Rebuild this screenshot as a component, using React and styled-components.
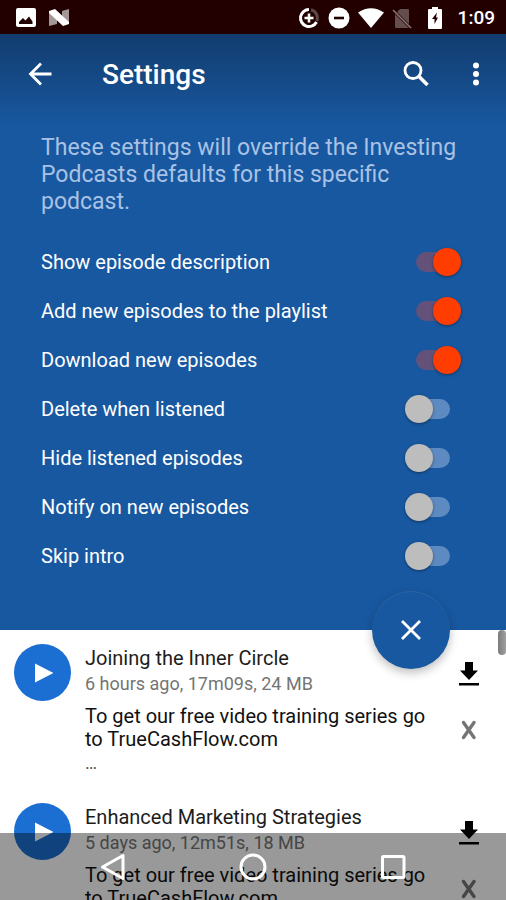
import React, { useState } from "react";
import styled, { createGlobalStyle } from "styled-components";

const GlobalStyle = createGlobalStyle`
  *, *::before, *::after { box-sizing: border-box; }
  body {
    margin: 0;
    background: #fff;
    font-family: Roboto, "Noto Sans", sans-serif;
  }
`;

const Screen = styled.div`
  display: flex;
  flex-direction: column;
  height: 100vh;
  overflow: hidden;
  background: #fff;
`;

const StatusBar = styled.div`
  display: flex;
  flex: none;
  align-items: center;
  justify-content: space-between;
  height: 34px;
  padding: 2px 11px 0 14px;
  background: #220000;
  color: #fff;
`;

const StatusGroup = styled.div`
  display: flex;
  align-items: center;
  gap: ${(p) => p.$gap}px;
`;

const Clock = styled.time`
  font-size: 19px;
  font-weight: 500;
  line-height: 24px;
`;

const SettingsPanel = styled.section`
  position: relative;
  z-index: 1;
  flex: none;
  padding-bottom: 50px;
  color: #fff;
  background: linear-gradient(#123c6e, #1858a0 92px);
`;

const Toolbar = styled.header`
  display: flex;
  align-items: center;
  height: 80px;
  padding: 0 8px 0 20px;
`;

const IconButton = styled.button`
  display: flex;
  flex: none;
  align-items: center;
  justify-content: center;
  width: 40px;
  height: 40px;
  padding: 0;
  border: 0;
  background: none;
  color: ${(p) => p.$color || "#fff"};
  cursor: pointer;
`;

const Title = styled.h1`
  flex: 1;
  margin: 2px 0 0 42px;
  font-size: 28px;
  font-weight: 500;
  line-height: 32px;
`;

const ToolbarActions = styled.div`
  display: flex;
  gap: 20px;
  margin-right: 2px;
`;

const Intro = styled.p`
  margin: 20px 41px 22px;
  font-size: 23px;
  line-height: 27px;
  color: #a9c2e4;
`;

const SettingRow = styled.label`
  display: flex;
  align-items: center;
  justify-content: space-between;
  height: 49px;
  padding: 0 45px 0 41px;
  font-size: 20px;
  line-height: 24px;
  cursor: pointer;
`;

const Switch = styled.input`
  appearance: none;
  display: grid;
  flex: none;
  align-items: center;
  width: 56px;
  height: 28px;
  margin: 0;
  cursor: pointer;

  &::before,
  &::after {
    content: "";
    grid-area: 1 / 1;
  }
  &::before {
    justify-self: center;
    width: 34px;
    height: 20px;
    border-radius: 10px;
    background: #5d8ac0;
  }
  &::after {
    justify-self: start;
    width: 28px;
    height: 28px;
    border-radius: 50%;
    background: #bdbdbd;
    box-shadow: 0 1px 3px rgba(0, 0, 0, 0.4);
  }
  &:checked::before { background: #63517a; }
  &:checked::after {
    justify-self: end;
    background: #ff3d00;
  }
`;

const CloseFab = styled.button`
  position: absolute;
  right: 56px;
  bottom: -39px;
  display: flex;
  align-items: center;
  justify-content: center;
  width: 78px;
  height: 78px;
  padding: 0;
  border: 0;
  border-radius: 50%;
  background: #1858a0;
  color: #fff;
  box-shadow: 0 4px 10px rgba(0, 0, 0, 0.25), inset 0 1px 0 rgba(255, 255, 255, 0.08);
  cursor: pointer;
`;

const EpisodeArea = styled.main`
  position: relative;
  flex: 1;
  min-height: 0;
  overflow: hidden;
`;

const ScrollThumb = styled.div`
  position: absolute;
  top: 0;
  right: 0;
  width: 8px;
  height: 25px;
  border-radius: 4px;
  background: linear-gradient(90deg, #7c7c7c, #a0a0a0);
`;

const EpisodeList = styled.ul`
  margin: 0;
  padding: 0;
  list-style: none;
`;

const Episode = styled.li`
  display: flex;
  align-items: flex-start;
  padding: 14px 17px 14px 14px;
`;

const PlayButton = styled.button`
  display: flex;
  flex: none;
  align-items: center;
  justify-content: center;
  width: 57px;
  height: 57px;
  padding: 0;
  border: 0;
  border-radius: 50%;
  background: #1b6fd2;
  color: #fff;
  cursor: pointer;
`;

const EpisodeText = styled.div`
  flex: 1;
  min-width: 0;
  margin: 1px 12px 0 14px;
`;

const EpisodeTitle = styled.h2`
  margin: 0;
  font-size: 20px;
  font-weight: 400;
  line-height: 26px;
  color: #1c1c1c;
`;

const EpisodeMeta = styled.p`
  margin: 0 0 8px;
  font-size: 18px;
  line-height: 26px;
  color: #757575;
`;

const EpisodeDescription = styled.p`
  margin: 0;
  font-size: 20px;
  line-height: 23px;
  color: #111;
`;

const More = styled.div`
  font-size: 18px;
  line-height: 24px;
  color: #555;
`;

const EpisodeActions = styled.div`
  display: flex;
  flex-direction: column;
  gap: 16px;
  margin-top: 10px;
`;

const NavigationBar = styled.nav`
  position: fixed;
  inset: auto 0 0;
  z-index: 2;
  display: flex;
  height: 67px;
  padding: 0 43px;
  background: rgba(0, 0, 0, 0.4);
`;

const NavButton = styled.button`
  display: flex;
  flex: 1;
  align-items: center;
  justify-content: center;
  padding: 0;
  border: 0;
  background: none;
  color: #fff;
  cursor: pointer;
`;

const PictureIcon = () => (
  <svg width="24" height="24" viewBox="0 0 24 24" aria-hidden="true">
    <rect x="2" y="2" width="20" height="19" rx="2" fill="#fff" />
    <path d="M5 18v-2l4-4 2.500 2.500 3.500-4 3.500 5V18z" fill="#220000" />
  </svg>
);

const NougatIcon = () => (
  <svg width="23" height="20" viewBox="0 0 23 20" aria-hidden="true">
    <path d="M1 4l8 5v7l-8 2zM14 3l7-2v15l-7-3z" fill="#a39797" />
    <path d="M1 3l6-2 14 13v2l-6 2L1 5z" fill="#fff" />
  </svg>
);

const DataSaverIcon = () => (
  <svg width="22" height="22" viewBox="0 0 22 22" fill="none" aria-hidden="true">
    <path d="M11 2.500A8.500 8.500 0 1 0 18.500 15" stroke="#fff" strokeWidth="3" />
    <path d="M13 2.700A8.500 8.500 0 0 1 18.800 14" stroke="#5f4646" strokeWidth="3" />
    <path d="M11 6.500v9M6.500 11h9" stroke="#fff" strokeWidth="2.600" />
  </svg>
);

const DoNotDisturbIcon = () => (
  <svg width="22" height="22" viewBox="0 0 22 22" aria-hidden="true">
    <circle cx="11" cy="11" r="10.500" fill="#fff" />
    <path d="M6 9.700h10v2.600H6z" fill="#220000" />
  </svg>
);

const WifiIcon = () => (
  <svg width="26" height="20" viewBox="0 0 26 20" aria-hidden="true">
    <path d="M0 4.500Q13-4 26 4.500L13 20z" fill="#fff" />
  </svg>
);

const NoSimIcon = () => (
  <svg width="20" height="21" viewBox="0 0 20 21" aria-hidden="true">
    <path d="M8 1h8q1 0 1 1v14L5 4zM3 6l14 14H4q-1 0-1-1z" fill="#654d4d" />
    <path d="M1 2l18 18" stroke="#8c7676" strokeWidth="1.600" />
  </svg>
);

const BatteryIcon = () => (
  <svg width="30" height="22" viewBox="-8 0 30 22" aria-hidden="true">
    <path d="M4 0h6v2h3q1 0 1 1v18q0 1-1 1H1q-1 0-1-1V3q0-1 1-1h3z" fill="#fff" />
    <path d="M9 5.500L4 12h2.500v5L10 10.500H8z" fill="#220000" />
  </svg>
);

const BackIcon = () => (
  <svg width="24" height="24" viewBox="0 0 24 24" fill="none" stroke="currentColor" strokeWidth="2.800" aria-hidden="true">
    <path d="M13 1.500L2.500 12 13 22.500M2.500 12H23.500" />
  </svg>
);

const SearchIcon = () => (
  <svg width="26" height="26" viewBox="0 0 26 26" fill="none" stroke="currentColor" aria-hidden="true">
    <circle cx="10" cy="9.500" r="8" strokeWidth="2.800" />
    <path d="M15.500 15L24.500 24" strokeWidth="3.500" />
  </svg>
);

const OverflowIcon = () => (
  <svg width="8" height="26" viewBox="0 0 8 26" fill="currentColor" aria-hidden="true">
    <circle cx="4" cy="4.500" r="3" />
    <circle cx="4" cy="13" r="3" />
    <circle cx="4" cy="21.500" r="3" />
  </svg>
);

const CloseIcon = () => (
  <svg width="22" height="22" viewBox="0 0 22 22" stroke="currentColor" strokeWidth="2.800" aria-hidden="true">
    <path d="M2 2l18 18M20 2L2 20" />
  </svg>
);

const PlayIcon = () => (
  <svg width="20" height="20" viewBox="0 0 20 20" fill="currentColor" aria-hidden="true">
    <path d="M2 0.500v19L20.500 10z" />
  </svg>
);

const DownloadIcon = () => (
  <svg width="20" height="24" viewBox="0 0 20 24" fill="currentColor" aria-hidden="true">
    <path d="M6 0h8v8.500h5L10 18 1 8.500h5zM0 21h20v2.600H0z" />
  </svg>
);

const RemoveIcon = () => (
  <svg width="16" height="20" viewBox="0 0 16 20" stroke="currentColor" strokeWidth="3.400" strokeLinecap="round" aria-hidden="true">
    <path d="M2.500 2.500l10.500 15M13 2.500L2.500 17.500" />
  </svg>
);

const NavBackIcon = () => (
  <svg width="26" height="28" viewBox="0 0 26 28" fill="none" stroke="currentColor" strokeWidth="3" strokeLinejoin="round" aria-hidden="true">
    <path d="M23 2.500v23L2.500 14z" />
  </svg>
);

const NavHomeIcon = () => (
  <svg width="28" height="28" viewBox="0 0 28 28" fill="none" stroke="currentColor" strokeWidth="3" aria-hidden="true">
    <circle cx="14" cy="14" r="12" />
  </svg>
);

const NavRecentIcon = () => (
  <svg width="26" height="26" viewBox="0 0 26 26" fill="none" stroke="currentColor" strokeWidth="3" aria-hidden="true">
    <rect x="2.500" y="2.500" width="21.500" height="21" rx="1" />
  </svg>
);

const initialSettings = [
  ["Show episode description", true],
  ["Add new episodes to the playlist", true],
  ["Download new episodes", true],
  ["Delete when listened", false],
  ["Hide listened episodes", false],
  ["Notify on new episodes", false],
  ["Skip intro", false],
];

const episodes = [
  { title: "Joining the Inner Circle", meta: "6 hours ago, 17m09s, 24 MB" },
  { title: "Enhanced Marketing Strategies", meta: "5 days ago, 12m51s, 18 MB" },
];

export default function App() {
  const [settings, setSettings] = useState(initialSettings);
  const toggle = (name) =>
    setSettings((all) => all.map(([n, on]) => [n, n === name ? !on : on]));

  return (
    <>
      <GlobalStyle />
      <Screen>
        <StatusBar>
          <StatusGroup $gap={10}>
            <PictureIcon />
            <NougatIcon />
          </StatusGroup>
          <StatusGroup $gap={8}>
            <DataSaverIcon />
            <DoNotDisturbIcon />
            <WifiIcon />
            <NoSimIcon />
            <BatteryIcon />
            <Clock>1:09</Clock>
          </StatusGroup>
        </StatusBar>

        <SettingsPanel>
          <Toolbar>
            <IconButton aria-label="Back"><BackIcon /></IconButton>
            <Title>Settings</Title>
            <ToolbarActions>
              <IconButton aria-label="Search"><SearchIcon /></IconButton>
              <IconButton aria-label="More options"><OverflowIcon /></IconButton>
            </ToolbarActions>
          </Toolbar>
          <Intro>
            These settings will override the Investing Podcasts defaults for this specific podcast.
          </Intro>
          {settings.map(([name, on]) => (
            <SettingRow key={name}>
              {name}
              <Switch type="checkbox" role="switch" checked={on} onChange={() => toggle(name)} />
            </SettingRow>
          ))}
          <CloseFab aria-label="Close settings"><CloseIcon /></CloseFab>
        </SettingsPanel>

        <EpisodeArea>
          <EpisodeList>
            {episodes.map((episode) => (
              <Episode key={episode.title}>
                <PlayButton aria-label={`Play ${episode.title}`}><PlayIcon /></PlayButton>
                <EpisodeText>
                  <EpisodeTitle>{episode.title}</EpisodeTitle>
                  <EpisodeMeta>{episode.meta}</EpisodeMeta>
                  <EpisodeDescription>
                    To get our free video training series go to TrueCashFlow.com
                  </EpisodeDescription>
                  <More>…</More>
                </EpisodeText>
                <EpisodeActions>
                  <IconButton $color="#000" aria-label={`Download ${episode.title}`}><DownloadIcon /></IconButton>
                  <IconButton $color="#757575" aria-label={`Remove ${episode.title}`}><RemoveIcon /></IconButton>
                </EpisodeActions>
              </Episode>
            ))}
          </EpisodeList>
          <ScrollThumb />
        </EpisodeArea>

        <NavigationBar aria-label="System">
          <NavButton aria-label="Back"><NavBackIcon /></NavButton>
          <NavButton aria-label="Home"><NavHomeIcon /></NavButton>
          <NavButton aria-label="Recent apps"><NavRecentIcon /></NavButton>
        </NavigationBar>
      </Screen>
    </>
  );
}
